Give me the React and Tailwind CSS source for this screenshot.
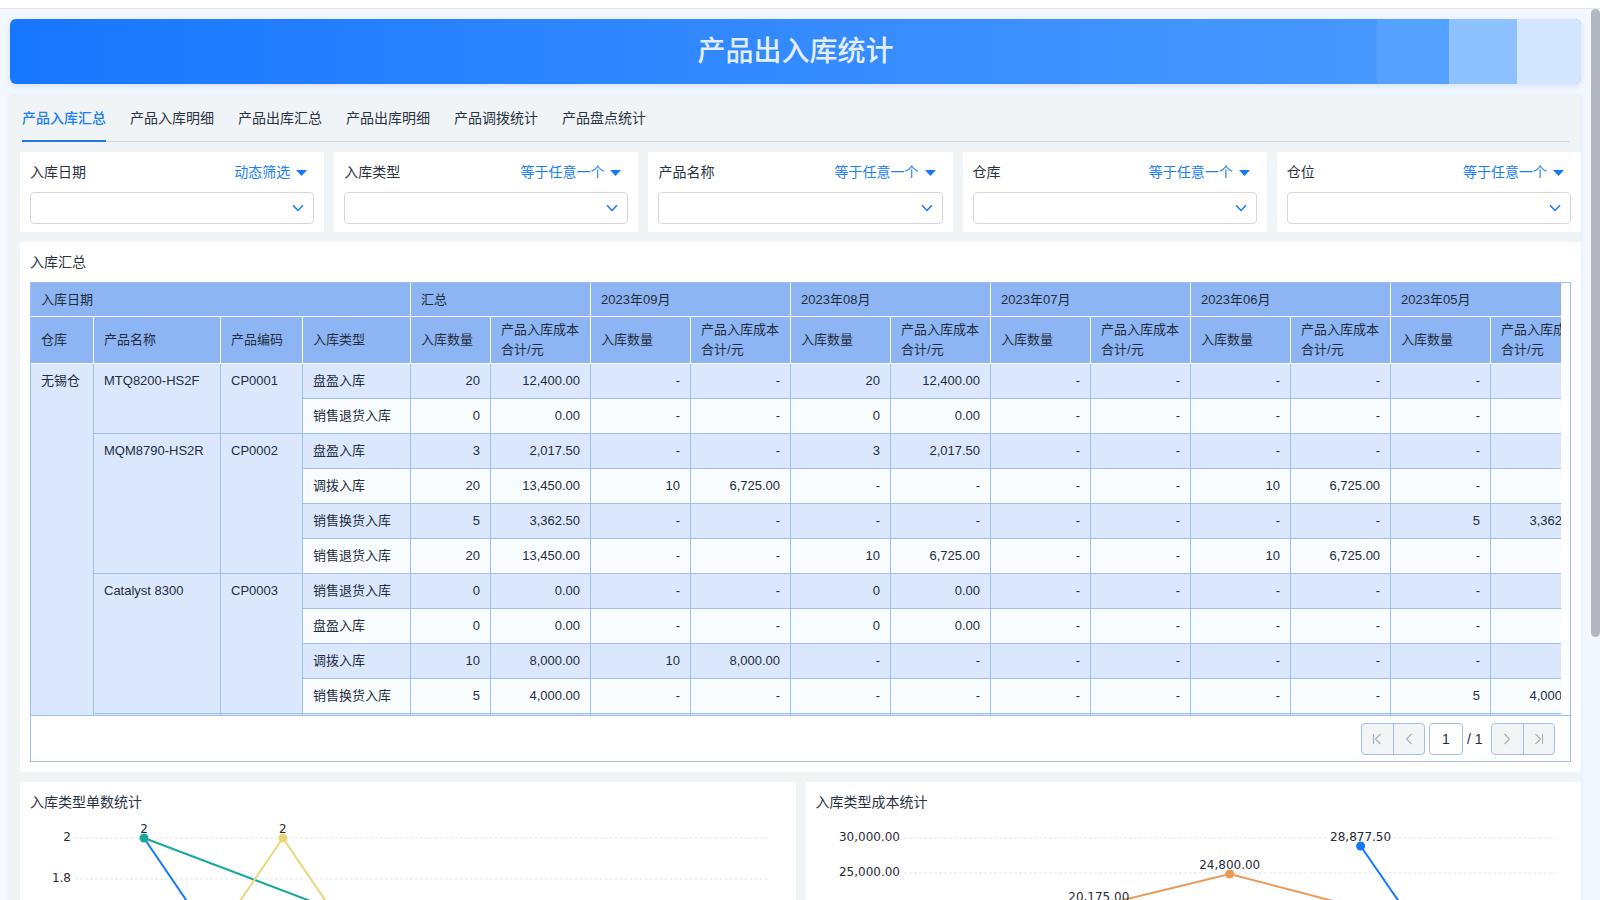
import { useState } from 'react'

const TABS = ['产品入库汇总', '产品入库明细', '产品出库汇总', '产品出库明细', '产品调拨统计', '产品盘点统计']

const FILTERS = [
  { label: '入库日期', op: '动态筛选' },
  { label: '入库类型', op: '等于任意一个' },
  { label: '产品名称', op: '等于任意一个' },
  { label: '仓库', op: '等于任意一个' },
  { label: '仓位', op: '等于任意一个' },
]

const GROUPS = ['汇总', '2023年09月', '2023年08月', '2023年07月', '2023年06月', '2023年05月']

// cells: [数量, 成本] for each group, N = no data in that month
const N = ['-', '-']
const PRODUCTS = [
  {
    name: 'MTQ8200-HS2F',
    code: 'CP0001',
    rows: [
      { type: '盘盈入库', cells: [['20', '12,400.00'], N, ['20', '12,400.00'], N, N, N] },
      { type: '销售退货入库', cells: [['0', '0.00'], N, ['0', '0.00'], N, N, N] },
    ],
  },
  {
    name: 'MQM8790-HS2R',
    code: 'CP0002',
    rows: [
      { type: '盘盈入库', cells: [['3', '2,017.50'], N, ['3', '2,017.50'], N, N, N] },
      { type: '调拨入库', cells: [['20', '13,450.00'], ['10', '6,725.00'], N, N, ['10', '6,725.00'], N] },
      { type: '销售换货入库', cells: [['5', '3,362.50'], N, N, N, N, ['5', '3,362.50']] },
      { type: '销售退货入库', cells: [['20', '13,450.00'], N, ['10', '6,725.00'], N, ['10', '6,725.00'], N] },
    ],
  },
  {
    name: 'Catalyst 8300',
    code: 'CP0003',
    rows: [
      { type: '销售退货入库', cells: [['0', '0.00'], N, ['0', '0.00'], N, N, N] },
      { type: '盘盈入库', cells: [['0', '0.00'], N, ['0', '0.00'], N, N, N] },
      { type: '调拨入库', cells: [['10', '8,000.00'], ['10', '8,000.00'], N, N, N, N] },
      { type: '销售换货入库', cells: [['5', '4,000.00'], N, N, N, N, ['5', '4,000.00']] },
    ],
  },
]

const ROWS = PRODUCTS.flatMap((p) =>
  p.rows.map((r, i) => ({ ...r, product: i === 0 ? p : null }))
)

const TH = 'border-r border-b border-white bg-[#8db5f3] px-[10px] text-left font-normal leading-5'
const TD = 'border-r border-b border-[#9fc0ee] px-[10px]'
const MERGED = 'border-r border-b border-[#9fc0ee] bg-[#dbe7fd] px-[10px] py-2 align-top'

const Banner = () => (
  <header className="relative flex h-[65px] items-center justify-center overflow-hidden rounded-md bg-linear-to-r from-[#1677ff] to-[#4d9dff] shadow-[0_2px_6px_rgba(40,80,200,0.15)]">
    <div className="absolute inset-y-0 right-0 flex">
      <div className="w-[72px] bg-[#55a1ff]" />
      <div className="w-[68px] bg-[#8ec2ff]" />
      <div className="w-16 bg-[#d2e7ff]" />
    </div>
    <h1 className="relative text-[28px] font-medium leading-9 text-[#e3efff]">产品出入库统计</h1>
  </header>
)

const FilterCard = ({ id, label, op }) => (
  <div className="min-w-0 flex-1 bg-white px-[10px] pt-[10px] pb-2">
    <div className="flex h-5 items-center">
      <label htmlFor={id} className="flex-1 truncate">{label}</label>
      <div className="flex items-center gap-[6px] pr-[7px]">
        <select
          aria-label={`${label}筛选方式`}
          className="field-sizing-content cursor-pointer appearance-none bg-transparent leading-5 text-[#2080ef] outline-none"
        >
          <option>{op}</option>
        </select>
        <svg viewBox="0 0 11 6" className="mt-[2px] h-[6px] w-[11px] fill-[#1677ff]">
          <path d="M0 0h11L5.5 6z" />
        </svg>
      </div>
    </div>
    <div className="relative mt-[10px]">
      <select
        id={id}
        className="h-8 w-full appearance-none rounded border border-[#d5d8dc] bg-white px-2 outline-none"
      >
        <option></option>
      </select>
      <svg
        viewBox="0 0 12 8"
        className="pointer-events-none absolute top-3 right-[10px] h-2 w-3 fill-none stroke-[#1677ff]"
        strokeWidth="1.5"
      >
        <path d="M1 1.2l5 5.2 5-5.2" />
      </svg>
    </div>
  </div>
)

const SummaryTable = () => (
  <div className="h-[432px] overflow-hidden pr-[9px]">
    <div className="h-full overflow-hidden">
      <table className="w-[1560px] table-fixed border-separate border-spacing-0 text-[13px] text-[#1f2d3d]">
        <colgroup>
          <col className="w-[63px]" />
          <col className="w-[127px]" />
          <col className="w-[82px]" />
          <col className="w-[108px]" />
          <col className="w-[80px]" />
          <col className="w-[100px]" />
          {GROUPS.slice(1).map((g) => [
            <col key={`${g}-qty`} className="w-[100px]" />,
            <col key={`${g}-cost`} className="w-[100px]" />,
          ])}
        </colgroup>
        <thead>
          <tr className="h-[34px]">
            <th colSpan={4} className={TH}>入库日期</th>
            {GROUPS.map((g) => (
              <th key={g} colSpan={2} className={TH}>{g}</th>
            ))}
          </tr>
          <tr className="h-[47px]">
            <th className={TH}>仓库</th>
            <th className={TH}>产品名称</th>
            <th className={TH}>产品编码</th>
            <th className={TH}>入库类型</th>
            {GROUPS.map((g) => [
              <th key={`${g}-qty`} className={TH}>入库数量</th>,
              <th key={`${g}-cost`} className={TH}>产品入库成本<br />合计/元</th>,
            ])}
          </tr>
        </thead>
        <tbody>
          {ROWS.map((row, i) => (
            <tr key={i} className={i % 2 === 0 ? 'h-[35px] bg-[#dbe7fd]' : 'h-[35px] bg-[#f9fcff]'}>
              {i === 0 && <td rowSpan={ROWS.length + 1} className={MERGED}>无锡仓</td>}
              {row.product && (
                <>
                  <td rowSpan={row.product.rows.length} className={MERGED}>{row.product.name}</td>
                  <td rowSpan={row.product.rows.length} className={MERGED}>{row.product.code}</td>
                </>
              )}
              <td className={TD}>{row.type}</td>
              {row.cells.map((pair, g) =>
                pair.map((value, k) => (
                  <td key={`${g}-${k}`} className={`${TD} text-right`}>{value}</td>
                ))
              )}
            </tr>
          ))}
          <tr className="h-[35px] bg-[#dbe7fd]">
            {Array.from({ length: 15 }, (_, i) => (
              <td key={i} className={TD} />
            ))}
          </tr>
        </tbody>
      </table>
    </div>
  </div>
)

const PagerIcon = ({ d }) => (
  <svg viewBox="0 0 12 12" className="h-3 w-3 fill-none stroke-[#a9afb8]" strokeWidth="1.1">
    <path d={d} />
  </svg>
)

const PagerGroup = ({ items }) => (
  <div className="flex h-8 w-16 divide-x divide-[#9fc0ee] overflow-hidden rounded border border-[#9fc0ee] bg-[#f2f4f6]">
    {items.map((item) => (
      <button key={item.label} type="button" aria-label={item.label} className="flex flex-1 items-center justify-center">
        <PagerIcon d={item.d} />
      </button>
    ))}
  </div>
)

const Pager = () => (
  <div className="flex h-[46px] items-center justify-end border-t border-[#9fc0ee] pr-[15px] text-sm text-[#1f2d3d]">
    <PagerGroup
      items={[
        { label: '首页', d: 'M2.5 1v10M9.5 1l-5 5 5 5' },
        { label: '上一页', d: 'M8.5 1l-5 5 5 5' },
      ]}
    />
    <input
      type="text"
      aria-label="页码"
      defaultValue="1"
      className="ml-1 h-8 w-[34px] rounded border border-[#9fc0ee] bg-white text-center outline-none"
    />
    <span className="mr-2 ml-1 w-4 whitespace-nowrap">/ 1</span>
    <PagerGroup
      items={[
        { label: '下一页', d: 'M3.5 1l5 5-5 5' },
        { label: '末页', d: 'M2.5 1l5 5-5 5M9.5 1v10' },
      ]}
    />
  </div>
)

const ChartCard = ({ title, gridStart, ticks, series, labels }) => (
  <section className="min-w-0 flex-1 bg-white p-[10px]">
    <h2 className="leading-5">{title}</h2>
    <svg
      viewBox="0 0 756 120"
      className="w-full font-['DejaVu_Sans',sans-serif] text-[12px]"
      role="img"
      aria-label={title}
    >
      {ticks.map((t) => (
        <g key={t.text}>
          <line x1={gridStart} x2="740" y1={t.y} y2={t.y} stroke="#e3e6ea" strokeDasharray="3 2" />
          <text x={gridStart - 4} y={t.y + 3} textAnchor="end" className="fill-[#1f2937]">{t.text}</text>
        </g>
      ))}
      {series.map((s) => (
        <g key={s.color}>
          <polyline points={s.line} fill="none" stroke={s.color} strokeWidth="2" />
          {s.dot && <circle cx={s.dot[0]} cy={s.dot[1]} r="4.5" fill={s.color} />}
        </g>
      ))}
      {labels.map((l) => (
        <text key={`${l.x}-${l.text}`} x={l.x} y={l.y} textAnchor="middle" className="fill-[#1f2937]">{l.text}</text>
      ))}
    </svg>
  </section>
)

export default function App() {
  const [tab, setTab] = useState(TABS[0])

  return (
    <div className="flex h-screen flex-col overflow-hidden bg-[#f3f8ff] font-['Liberation_Sans','Noto_Sans_CJK_SC',sans-serif] text-sm text-[#2a3240]">
      <div className="h-[9px] shrink-0 border-b border-[#dfe5f0] bg-white" />
      <div className="flex min-h-0 flex-1">
        <main className="min-w-0 flex-1 overflow-hidden p-[10px]">
          <Banner />

          <div className="mt-3 bg-[#f0f4f7] shadow-[0_0_4px_rgba(60,100,200,0.1)]">
            <nav className="mx-3 flex h-[46px] gap-6 border-b border-[#cdd4da]">
              {TABS.map((t) => (
                <button
                  key={t}
                  type="button"
                  onClick={() => setTab(t)}
                  className={
                    t === tab
                      ? '-mb-px border-b-2 border-[#2878d8] font-medium text-[#2080ef]'
                      : '-mb-px border-b-2 border-transparent'
                  }
                >
                  {t}
                </button>
              ))}
            </nav>

            <div className="flex flex-col gap-[10px] py-[10px] pl-[10px]">
              <div className="flex gap-[10px]">
                {FILTERS.map((f, i) => (
                  <FilterCard key={f.label} id={`filter-${i}`} label={f.label} op={f.op} />
                ))}
              </div>

              <section className="bg-white p-[10px]">
                <h2 className="leading-5">入库汇总</h2>
                <div className="mt-[10px] border border-[#9fc0ee]">
                  <SummaryTable />
                  <Pager />
                </div>
              </section>

              <div className="flex gap-[10px]">
                <ChartCard
                  title="入库类型单数统计"
                  gridStart={45}
                  ticks={[
                    { y: 26, text: '2' },
                    { y: 67, text: '1.8' },
                  ]}
                  series={[
                    { color: '#1677ff', line: '114,26 182,126' },
                    { color: '#1ba89c', line: '114,26 378,126', dot: [114, 26] },
                    { color: '#e9d77c', line: '185,126 253,26 321,126', dot: [253, 26] },
                  ]}
                  labels={[
                    { x: 114, y: 21, text: '2' },
                    { x: 253, y: 21, text: '2' },
                  ]}
                />
                <ChartCard
                  title="入库类型成本统计"
                  gridStart={88}
                  ticks={[
                    { y: 26, text: '30,000.00' },
                    { y: 61, text: '25,000.00' },
                  ]}
                  series={[
                    { color: '#eb9a56', line: '283,94 414,62 544,96', dot: [414, 62] },
                    { color: '#1677ff', line: '545,34 607,124', dot: [545, 34] },
                  ]}
                  labels={[
                    { x: 545, y: 29, text: '28,877.50' },
                    { x: 414, y: 57, text: '24,800.00' },
                    { x: 283, y: 89, text: '20,175.00' },
                  ]}
                />
              </div>
            </div>
          </div>
        </main>
        <div className="w-[9px] shrink-0">
          <div className="h-[628px] rounded-full bg-[#b1b8c0]" />
        </div>
      </div>
    </div>
  )
}
